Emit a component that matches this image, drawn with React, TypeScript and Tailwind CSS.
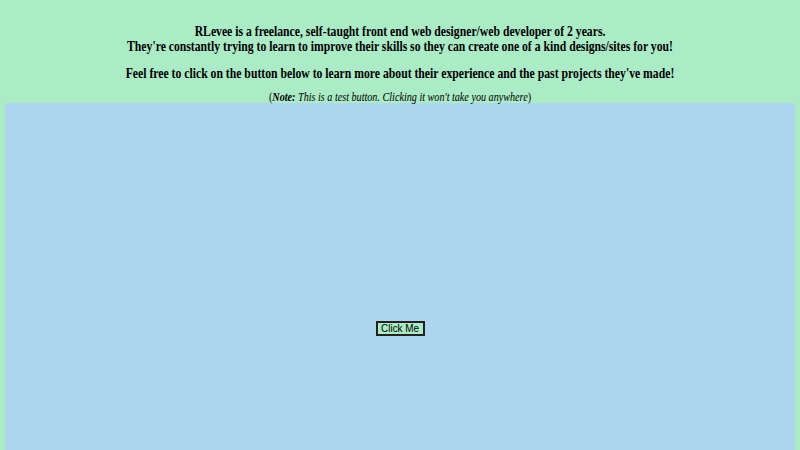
export default function App() {
  return (
    <div className="min-h-screen bg-[#abebc6] px-[5px] pt-[24px] font-['Liberation_Serif',serif] text-black">
      {/* the reference text is horizontally condensed */}
      <div className="scale-x-[0.78] text-center text-[15px] font-bold leading-[15px]">
        <p>RLevee is a freelance, self-taught front end web designer/web developer of 2 years.</p>
        <p>They're constantly trying to learn to improve their skills so they can create one of a kind designs/sites for you!</p>
        <p className="mt-[12px]">Feel free to click on the button below to learn more about their experience and the past projects they've made!</p>
      </div>
      <p className="mt-[9px] scale-x-[0.78] text-center text-[13px] leading-[13px]">
        (<i><b>Note:</b> This is a test button. Clicking it won't take you anywhere</i>)
      </p>
      <div className="flex h-[450px] items-center justify-center bg-[#aed6f1]">
        <button className="flex h-[15px] w-[49px] items-center justify-center border-2 border-[#222] bg-[#abebc6] p-0 font-['Liberation_Sans',sans-serif] text-[11px] leading-[11px]">
          <span className="inline-block scale-x-[0.9]">Click Me</span>
        </button>
      </div>
    </div>
  );
}
